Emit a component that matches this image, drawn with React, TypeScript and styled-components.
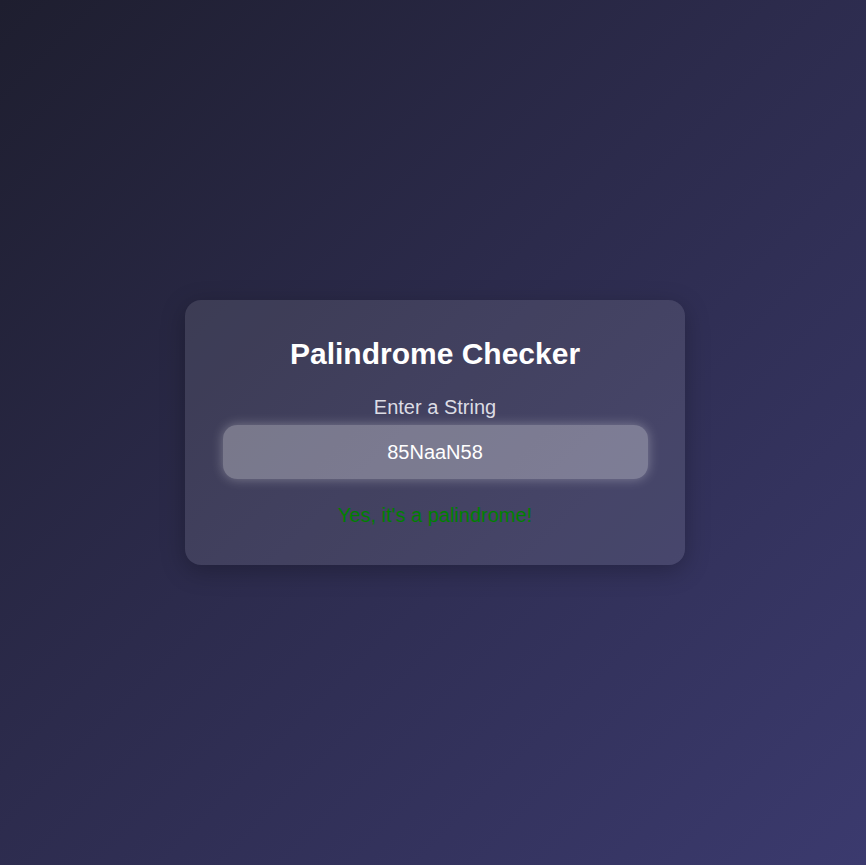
import React, { useState } from "react";
import styled, { createGlobalStyle } from "styled-components";

const GlobalStyle = createGlobalStyle`
  html, body {
    margin: 0;
    padding: 0;
  }
  body {
    font-family: "Liberation Sans", Arial, sans-serif;
    background: linear-gradient(135deg, #1e1e2f 0%, #2c2b4c 45%, #3b3a6e 100%);
    min-height: 100vh;
  }
  * { box-sizing: border-box; }
`;

const Page = styled.main`
  min-height: 100vh;
  display: flex;
  align-items: center;
  justify-content: center;
  padding-left: 4px;
`;

const Card = styled.section`
  width: 500px;
  height: 265px;
  padding: 37px 0 0;
  border-radius: 16px;
  background: rgba(255, 255, 255, 0.1);
  box-shadow: 0 6px 24px rgba(0, 0, 0, 0.25);
  display: flex;
  flex-direction: column;
  align-items: center;
`;

const Title = styled.h1`
  margin: 0;
  font-size: 30px;
  font-weight: 700;
  color: #ffffff;
`;

const Label = styled.label`
  margin-top: 25px;
  font-size: 20px;
  color: #dcdce4;
`;

const Input = styled.input`
  margin-top: 6px;
  width: 425px;
  height: 54px;
  border: none;
  outline: none;
  border-radius: 14px;
  background: rgba(255, 255, 255, 0.3);
  box-shadow: 0 0 12px rgba(255, 255, 255, 0.32);
  color: #ffffff;
  font-family: "Liberation Sans", Arial, sans-serif;
  font-size: 20px;
  text-align: center;
`;

const Result = styled.p<{ $ok: boolean }>`
  margin: 25px 0 0;
  font-size: 20px;
  color: ${(p) => (p.$ok ? "#008000" : "#c00000")};
`;

export default function App() {
  const [value, setValue] = useState("85NaaN58");
  const cleaned = value.toLowerCase().replace(/[^a-z0-9]/g, "");
  const ok = cleaned.length > 0 && cleaned === cleaned.split("").reverse().join("");
  return (
    <>
      <GlobalStyle />
      <Page>
        <Card>
          <Title>Palindrome Checker</Title>
          <Label htmlFor="str">Enter a String</Label>
          <Input id="str" value={value} onChange={(e) => setValue(e.target.value)} />
          <Result $ok={ok}>{ok ? "Yes, it's a palindrome!" : "No, it's not a palindrome."}</Result>
        </Card>
      </Page>
    </>
  );
}
